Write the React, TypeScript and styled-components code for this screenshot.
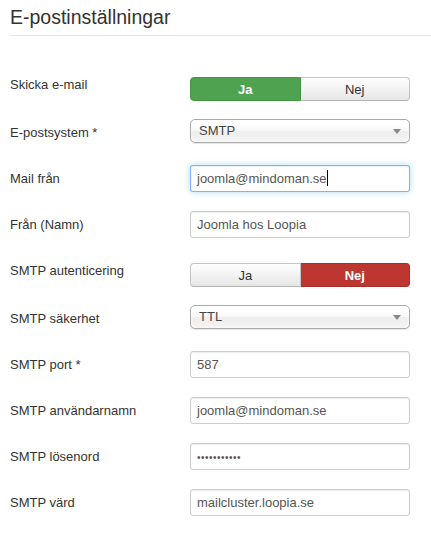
import React from "react";
import styled, { createGlobalStyle, css } from "styled-components";

const Global = createGlobalStyle`
  html, body { margin: 0; padding: 0; background: #fff; }
  body { font-family: "Liberation Sans", Arial, Helvetica, sans-serif; color: #333; }
`;

const Panel = styled.div`
  padding-left: 10px;
  width: 421px;
`;

const Legend = styled.div`
  height: 35px;
  line-height: 35px;
  font-size: 19.5px;
  color: #333;
  border-bottom: 1px solid #e5e5e5;
  margin-bottom: 35px;
  white-space: nowrap;
`;

const Row = styled.div`
  display: grid;
  grid-template-columns: 180px 220px;
  align-items: start;
  min-height: 28px;
  margin-bottom: 18px;
`;

const Label = styled.div`
  padding-top: 5px;
  line-height: 18px;
  font-size: 13px;
  color: #333;
  white-space: nowrap;
`;

const Toggle = styled.div`
  display: flex;
  margin-top: 6px;
  height: 24px;
`;

const ToggleBtn = styled.div<{ $active?: "yes" | "no"; $pos: "left" | "right" }>`
  flex: 1;
  display: flex;
  align-items: center;
  justify-content: center;
  font-size: 13px;
  box-sizing: border-box;
  border: 1px solid #c5c5c5;
  border-bottom-color: #b3b3b3;
  background: linear-gradient(#ffffff, #e6e6e6);
  color: #333;
  ${(p) =>
    p.$pos === "left"
      ? css`border-radius: 4px 0 0 4px;`
      : css`border-radius: 0 4px 4px 0; border-left: none;`}
  ${(p) =>
    p.$active === "yes" &&
    css`
      background: #4fa24f;
      border-color: #459345;
      color: #fff;
      font-weight: bold;
    `}
  ${(p) =>
    p.$active === "no" &&
    css`
      background: #bd362f;
      border-color: #a3302a;
      color: #fff;
      font-weight: bold;
    `}
`;

const Select = styled.div`
  position: relative;
  box-sizing: border-box;
  height: 24px;
  border: 1px solid #aaa;
  border-radius: 5px;
  background: linear-gradient(#ffffff 20%, #f6f6f6 50%, #eeeeee 52%, #f4f4f4 100%);
  box-shadow: 0 0 3px #fff inset, 0 1px 1px rgba(0, 0, 0, 0.1);
  padding-left: 8px;
  line-height: 22px;
  font-size: 13px;
  color: #444;
`;

const Arrow = styled.span`
  position: absolute;
  right: 8px;
  top: 9px;
  width: 0;
  height: 0;
  border-left: 4px solid transparent;
  border-right: 4px solid transparent;
  border-top: 5px solid #888;
`;

const Input = styled.div<{ $focused?: boolean }>`
  box-sizing: border-box;
  height: 27px;
  border: 1px solid #ccc;
  border-radius: 3px;
  padding: 0 6px;
  line-height: 25px;
  font-size: 13px;
  color: #555;
  background: #fff;
  box-shadow: inset 0 1px 1px rgba(0, 0, 0, 0.075);
  white-space: nowrap;
  ${(p) =>
    p.$focused &&
    css`
      border-color: rgba(82, 168, 236, 0.8);
      box-shadow: inset 0 1px 1px rgba(0, 0, 0, 0.075), 0 0 6px rgba(82, 168, 236, 0.45);
    `}
`;

const Caret = styled.span`
  display: inline-block;
  width: 1px;
  height: 16px;
  background: #000;
  vertical-align: -3px;
`;

const Dots = styled.span`
  font-size: 10px;
  letter-spacing: 0.5px;
  color: #555;
`;

type Field =
  | { kind: "toggle"; label: string; value: "yes" | "no" }
  | { kind: "select"; label: string; value: string }
  | { kind: "input"; label: string; value: string; focused?: boolean; password?: boolean };

const fields: Field[] = [
  { kind: "toggle", label: "Skicka e-mail", value: "yes" },
  { kind: "select", label: "E-postsystem *", value: "SMTP" },
  { kind: "input", label: "Mail från", value: "joomla@mindoman.se", focused: true },
  { kind: "input", label: "Från (Namn)", value: "Joomla hos Loopia" },
  { kind: "toggle", label: "SMTP autenticering", value: "no" },
  { kind: "select", label: "SMTP säkerhet", value: "TTL" },
  { kind: "input", label: "SMTP port *", value: "587" },
  { kind: "input", label: "SMTP användarnamn", value: "joomla@mindoman.se" },
  { kind: "input", label: "SMTP lösenord", value: "•••••••••••", password: true },
  { kind: "input", label: "SMTP värd", value: "mailcluster.loopia.se" },
];

function Control({ f }: { f: Field }) {
  if (f.kind === "toggle") {
    return (
      <Toggle>
        <ToggleBtn $pos="left" $active={f.value === "yes" ? "yes" : undefined}>
          Ja
        </ToggleBtn>
        <ToggleBtn $pos="right" $active={f.value === "no" ? "no" : undefined}>
          Nej
        </ToggleBtn>
      </Toggle>
    );
  }
  if (f.kind === "select") {
    return (
      <Select>
        {f.value}
        <Arrow />
      </Select>
    );
  }
  return (
    <Input $focused={f.focused}>
      {f.password ? <Dots>{f.value}</Dots> : f.value}
      {f.focused && <Caret />}
    </Input>
  );
}

export default function App() {
  return (
    <>
      <Global />
      <Panel>
        <Legend>E-postinställningar</Legend>
        {fields.map((f) => (
          <Row key={f.label}>
            <Label>{f.label}</Label>
            <Control f={f} />
          </Row>
        ))}
      </Panel>
    </>
  );
}
